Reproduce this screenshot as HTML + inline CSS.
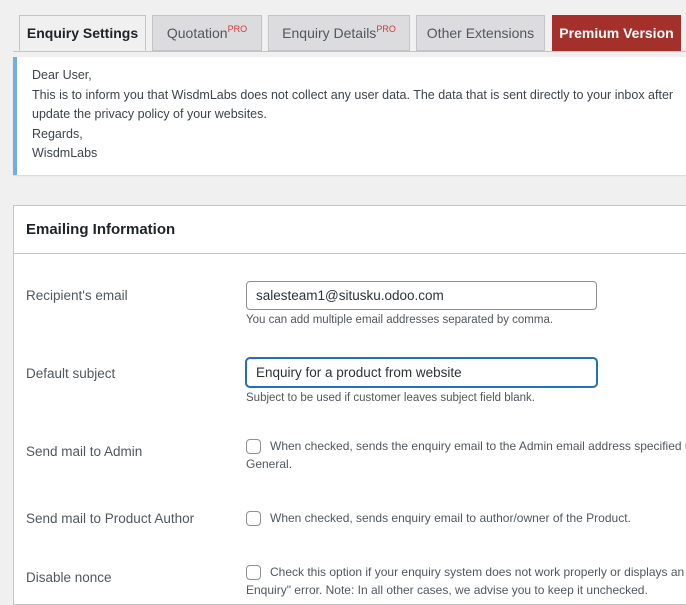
<!DOCTYPE html>
<html><head><style>
body{margin:0;width:686px;height:591px;overflow:hidden;background:#f0f0f1;font-family:"Liberation Sans",sans-serif;font-size:13px;color:#3c434a;position:relative}
.a{position:absolute}
.tab{position:absolute;top:15px;height:36px;box-sizing:border-box;border:1px solid #c3c4c7;background:#dcdcde;font-size:14px;line-height:34px;text-align:center;color:#50575e;white-space:nowrap}
.tab sup{font-size:9px;color:#d63638;position:relative;top:-6px;vertical-align:baseline;line-height:0}
.lbl{position:absolute;left:26px;font-size:13.5px;color:#50575e}
.inp{position:absolute;left:246px;width:351px;height:29px;box-sizing:border-box;border:1px solid #8c8f94;border-radius:4px;background:#fff;padding-left:9px;line-height:27px;font-size:13.5px;color:#2c3338}
.desc{position:absolute;left:246px;font-size:11.5px;color:#50575e}
.cb{position:absolute;left:246px;width:15px;height:15px;box-sizing:border-box;border:1px solid #8c8f94;border-radius:4px;background:#fff}
.ct{position:absolute;left:270px;font-size:12px;color:#50575e;white-space:nowrap}
</style></head><body>
<div class="a" style="left:13px;top:51px;width:673px;height:1px;background:#c3c4c7"></div>
<div class="tab" style="left:19px;width:127px;background:#f0f0f1;border-bottom-color:#f0f0f1;color:#1d2327;font-weight:bold">Enquiry Settings</div>
<div class="tab" style="left:152px;width:110px">Quotation<sup>PRO</sup></div>
<div class="tab" style="left:268px;width:142px">Enquiry Details<sup>PRO</sup></div>
<div class="tab" style="left:416px;width:129px">Other Extensions</div>
<div class="tab" style="left:552px;width:129px;background:#a3302b;border-color:#a3302b;color:#fff;font-weight:bold">Premium Version</div>
<div class="a" style="left:13px;top:57px;width:673px;height:118px;background:#fff;border-left:4px solid #72aee6;box-sizing:border-box;box-shadow:0 1px 1px rgba(0,0,0,.1);padding:9px 0 0 15px;font-size:12.5px;line-height:19.5px;color:#3c434a;white-space:nowrap">Dear User,<br>This is to inform you that WisdmLabs does not collect any user data. The data that is sent directly to your inbox after<br>update the privacy policy of your websites.<br>Regards,<br>WisdmLabs</div>
<div class="a" style="left:13px;top:205px;width:680px;height:400px;background:#fff;border:1px solid #c3c4c7;box-sizing:border-box"></div>
<div class="a" style="left:14px;top:253px;width:672px;height:1px;background:#c3c4c7"></div>
<div class="a" style="left:26px;top:221px;font-size:15px;font-weight:bold;color:#1d2327">Emailing Information</div>
<div class="lbl" style="top:288px">Recipient's email</div>
<div class="inp" style="top:281px">salesteam1@situsku.odoo.com</div>
<div class="desc" style="top:314px">You can add multiple email addresses separated by comma.</div>
<div class="lbl" style="top:366px">Default subject</div>
<div class="inp" style="top:358px;border-color:#2271b1;box-shadow:0 0 0 1px #2271b1">Enquiry for a product from website</div>
<div class="desc" style="top:392px">Subject to be used if customer leaves subject field blank.</div>
<div class="lbl" style="top:444px">Send mail to Admin</div>
<div class="cb" style="top:439px"></div>
<div class="ct" style="top:439px">When checked, sends the enquiry email to the Admin email address specified u</div>
<div class="a" style="left:246px;top:457px;font-size:12px;color:#50575e">General.</div>
<div class="lbl" style="top:511px">Send mail to Product Author</div>
<div class="cb" style="top:511px"></div>
<div class="ct" style="top:511px">When checked, sends enquiry email to author/owner of the Product.</div>
<div class="lbl" style="top:570px">Disable nonce</div>
<div class="cb" style="top:565px"></div>
<div class="ct" style="top:565px">Check this option if your enquiry system does not work properly or displays an</div>
<div class="a" style="left:246px;top:583px;font-size:12px;color:#50575e">Enquiry" error. Note: In all other cases, we advise you to keep it unchecked.</div>
</body></html>
